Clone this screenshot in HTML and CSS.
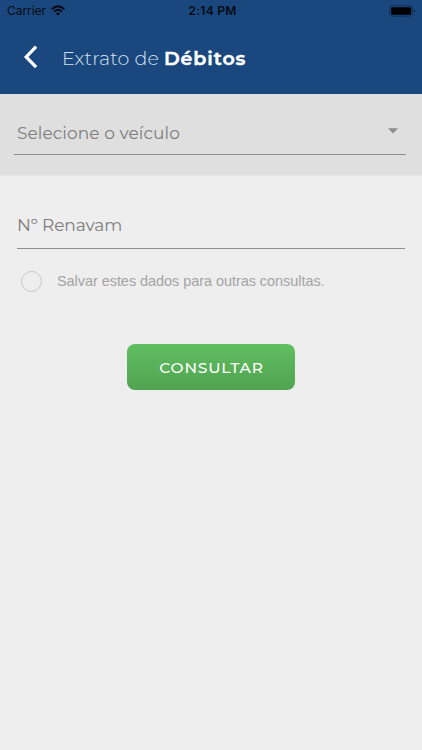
FILE: index.html
```html
<!DOCTYPE html>
<html lang="pt-BR">
<head>
<meta charset="utf-8">
<meta name="viewport" content="width=device-width, initial-scale=1">
<title>Extrato de Débitos</title>
<link rel="stylesheet" href="styles.css">
</head>
<body>
<header class="header">
  <div class="status">
    <div class="carrier"><span>Carrier</span>
      <svg class="wifi" width="14" height="11" viewBox="0 0 14 11"><g fill="none" stroke="#050b14" stroke-width="1.9"><path d="M.7 4.2Q7-1.7 13.3 4.2"/><path d="M3 6.6Q7 2.9 11 6.6"/></g><path d="M4.9 8.4Q7 6.6 9.1 8.4L7 10.5Z" fill="#050b14"/></svg>
    </div>
    <time class="clock">2:14 PM</time>
    <svg class="battery" width="28" height="12" viewBox="0 0 28 12"><rect x=".8" y=".8" width="22.8" height="10.4" rx="2.6" fill="none" stroke="#11305a" stroke-width="1"/><rect x="2.2" y="2.2" width="20" height="7.6" rx="1" fill="#000"/><path d="M25 4.2Q26.5 4.7 26.5 6T25 7.8Z" fill="#11305a"/></svg>
  </div>
  <div class="titlebar">
    <svg class="back" width="16" height="24" viewBox="0 0 16 24"><path d="M13.1 1.7 3.2 11.9l9.9 10.2" fill="none" stroke="#fff" stroke-width="3.2"/></svg>
    <h1 class="title"><span class="light">Extrato de</span> <strong>Débitos</strong></h1>
  </div>
</header>
<section class="vehicle">
  <div class="select"><span class="select-label">Selecione o veículo</span>
    <svg class="caret" width="10" height="6" viewBox="0 0 10 6"><path d="M0 .3h10L5 5.5Z" fill="#8c8c8c"/></svg>
  </div>
</section>
<main class="form">
  <div class="field"><span class="field-label">Nº Renavam</span></div>
  <label class="save"><span class="radio"></span><span class="save-label">Salvar estes dados para outras consultas.</span></label>
  <button class="submit" type="button"><span>CONSULTAR</span></button>
</main>
</body>
</html>
```
FILE: styles.css
```css
* { box-sizing: border-box; }
body { margin: 0; min-height: 750px; background: #eee; font-family: Montserrat, Inter, sans-serif; color: #888; }
.header { height: 94px; background: #1a487e; }
.status { height: 22px; display: grid; grid-template-columns: 1fr auto 1fr; align-items: center; padding: 0 5px 0 7px; color: #050b14; font: 12px/22px Inter, sans-serif; }
.carrier { display: flex; align-items: center; gap: 5px; letter-spacing: -.05px; }
.wifi { margin-top: -1px; }
.clock { font-weight: 600; letter-spacing: .25px; padding-left: 1px; }
.battery { justify-self: end; margin-top: -1px; }
.titlebar { display: flex; align-items: center; height: 72px; padding: 0 0 0 23px; }
.back { margin-top: -2px; }
.title { margin: 2px 0 0 23px; font-size: 19px; line-height: 26px; font-weight: 300; color: #fff; white-space: nowrap; }
.light { color: #d7e2f0; letter-spacing: .13px; }
.title strong { font-weight: 600; letter-spacing: .95px; -webkit-text-stroke: .5px #fff; }
.vehicle { height: 82px; background: #dfdfdf; padding: 17px 16px 0 14px; border-bottom: 1px solid #e6e6e6; }
.select { height: 44px; display: flex; align-items: center; justify-content: space-between; padding: 0 8px 0 3px; border-bottom: 1px solid #8d8d8d; }
.select-label, .field-label { font-size: 17px; line-height: 24px; letter-spacing: .07px; color: #7d7d7d; }
.field-label { margin-top: -4px; letter-spacing: -.1px; }
.caret { margin-top: -4px; }
.form { padding: 29px 17px 0; }
.field { height: 44px; display: flex; align-items: center; border-bottom: 1px solid #8d8d8d; }
.save { display: flex; align-items: center; height: 22px; margin-top: 21px; padding-left: 4px; }
.radio { width: 21px; height: 21px; border: 1px solid #c6c6ca; border-radius: 50%; }
.save-label { margin-left: 15px; font: 14.5px/20px "Liberation Sans", sans-serif; color: #a4a4a4; letter-spacing: -.06px; }
.submit { display: block; width: 168px; height: 46px; margin: 52px 0 0 110px; padding: 1px 0 0 1px; border: 0; border-radius: 8px; background: linear-gradient(#60be60, #51a351); color: #fff; font: 500 15.5px/46px Montserrat, Inter, sans-serif; letter-spacing: .8px; }
```
